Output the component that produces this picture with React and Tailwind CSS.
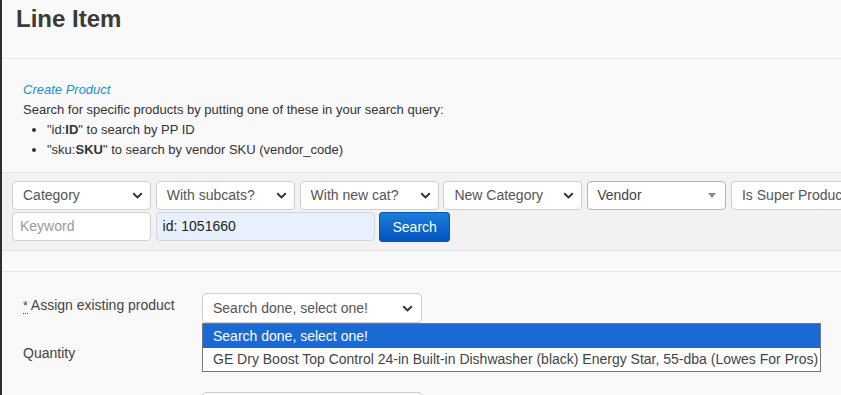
import React from "react";

const Chevron = () => (
  <svg width="11" height="7" viewBox="0 0 11 7" className="shrink-0">
    <path d="M1.2 1.2 L5.5 5.4 L9.8 1.2" fill="none" stroke="#333" strokeWidth="2" />
  </svg>
);

const Select = ({ label, w = "w-[139px]" }) => (
  <div className={`${w} h-[29px] shrink-0 bg-white border border-[#cfcfcf] rounded-[4px] flex items-center justify-between pl-[10px] pr-[7px] text-[14px] text-[#555]`}>
    <span className="whitespace-nowrap overflow-hidden">{label}</span>
    <Chevron />
  </div>
);

export default function App() {
  return (
    <div className="flex min-h-[395px] h-[395px] overflow-hidden bg-[#f9f9f9] text-[#333] font-['Liberation_Sans',Arial,sans-serif]">
      <div className="w-[2px] shrink-0 bg-[#2e2e2e]" />
      <div className="flex-1 min-w-0">
        <div className="h-[59px] border-b border-[#e6e6e6] pl-[14px] pt-[1px]">
          <h1 className="text-[24px] leading-[36px] font-bold text-[#3a3a3a]">Line Item</h1>
        </div>
        <div className="pl-[21px] pt-[21px] text-[13px] leading-[20px] text-[#333]">
          <div className="italic text-[#1a8fd6]">Create Product</div>
          <div>Search for specific products by putting one of these in your search query:</div>
          <ul className="list-disc pl-[24px]">
            <li>"id:<b>ID</b>" to search by PP ID</li>
            <li>"sku:<b>SKU</b>" to search by vendor SKU (vendor_code)</li>
          </ul>
        </div>
        <div className="mt-[12px] border-y border-[#e3e3e3] bg-[#f2f2f2] pl-[10px] pt-[8px] pb-[8px] overflow-hidden">
          <div className="flex gap-[4.8px]">
            <Select label="Category" />
            <Select label="With subcats?" />
            <Select label="With new cat?" />
            <Select label="New Category" />
            <div className="w-[139px] h-[29px] shrink-0 bg-white border border-[#b5b5b5] rounded-[4px] flex items-center justify-between pl-[9px] pr-[9px] text-[14px] text-[#444]">
              <span>Vendor</span>
              <span className="w-0 h-0 border-x-[4px] border-x-transparent border-t-[5px] border-t-[#888]" />
            </div>
            <Select label="Is Super Product" w="w-[160px]" />
          </div>
          <div className="flex gap-[4.6px] mt-[2px]">
            <div className="w-[139px] h-[29px] shrink-0 bg-white border border-[#cfcfcf] rounded-[4px] flex items-center pl-[7px] text-[14px] text-[#999]">
              Keyword
            </div>
            <div className="w-[219px] h-[29px] shrink-0 bg-[#e8f0fe] border border-[#cfd6e2] rounded-[4px] flex items-center pl-[6px] text-[14px] text-[#222]">
              id: 1051660
            </div>
            <div className="w-[71px] h-[30px] shrink-0 rounded-[3px] border border-[#0a55b0] bg-gradient-to-b from-[#1a7ddc] to-[#0552bd] flex items-center justify-center text-[14px] text-white">
              Search
            </div>
          </div>
        </div>
        <div className="h-[20px]" />
        <div className="relative border-t border-[#e6e6e6] pt-[21px]">
          <div className="flex items-start">
            <div className="w-[200px] pl-[21px] text-[14px] text-[#444] pt-[2px]">
              <span className="border-b border-dotted border-[#444] text-[12px] leading-[12px]">*</span>
              <span> Assign existing product</span>
            </div>
            <div className="w-[220px] h-[30px] bg-white border border-[#cfcfcf] rounded-[4px] flex items-center justify-between pl-[10px] pr-[8px] text-[14px] text-[#555]">
              <span>Search done, select one!</span>
              <Chevron />
            </div>
          </div>
          <div className="pl-[21px] mt-[20px] text-[14px] text-[#444]">Quantity</div>
          <div className="ml-[200px] mt-[28px] w-[220px] h-[30px] bg-white border border-[#cfcfcf] rounded-[4px]" />
          <div className="absolute left-[200px] top-[51px] w-[619px] bg-white border border-[#777] text-[14px]">
            <div className="h-[24px] bg-[#1a69d4] text-white flex items-center pl-[10px]">Search done, select one!</div>
            <div className="h-[23px] text-[#444] flex items-center pl-[10px] whitespace-nowrap">
              GE Dry Boost Top Control 24-in Built-in Dishwasher (black) Energy Star, 55-dba (Lowes For Pros)
            </div>
          </div>
        </div>
      </div>
    </div>
  );
}
